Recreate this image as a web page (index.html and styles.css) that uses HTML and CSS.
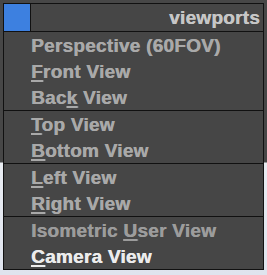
FILE: index.html
```html
<!DOCTYPE html>
<html lang="en">
  <head>
    <meta charset="utf-8" />
    <title>Viewports menu</title>
    <link rel="stylesheet" href="styles.css">
  </head>
  <body>
    <div class="menu">
      <div class="menu-header">
        <span class="swatch"></span>
        <span class="title">viewports</span>
      </div>
      <ul class="menu-group">
        <li>Perspective (60FOV)</li>
        <li><u>F</u>ront View</li>
        <li>Bac<u>k</u> View</li>
      </ul>
      <ul class="menu-group">
        <li><u>T</u>op View</li>
        <li><u>B</u>ottom View</li>
      </ul>
      <ul class="menu-group">
        <li><u>L</u>eft View</li>
        <li><u>R</u>ight View</li>
      </ul>
      <ul class="menu-group">
        <li class="dim">Isometric <u>U</u>ser View</li>
        <li class="active"><u>C</u>amera View</li>
      </ul>
    </div>
  </body>
</html>
```

FILE: styles.css
```css
body {
  margin: 0;
  height: 275px;
  background: linear-gradient(#474747 0, #474747 162px, #e9ecf2 163px, #dfe4ee 275px);
  font-family: "Liberation Sans", Arial, sans-serif;
  font-weight: bold;
  font-size: 19px;
  letter-spacing: 0.25px;
}
.menu {
  margin: 3px 3px 0 3px;
  border: 1px solid #111;
  background-color: #464646;
}
.menu-header {
  display: flex;
  align-items: center;
  height: 27px;
  border-bottom: 1px solid #111;
}
.swatch {
  width: 26px;
  height: 27px;
  background-color: #3d80e0;
  border-right: 1px solid #111;
}
.title {
  flex: 1;
  text-align: right;
  padding-right: 3px;
  color: #c6c6c6;
  line-height: 27px;
  text-shadow: 0.4px 0 0 #c6c6c6;
}
.menu-group {
  list-style: none;
  margin: 0;
  padding: 0;
  border-bottom: 1px solid #111;
}
.menu-group:last-child {
  border-bottom: none;
}
.menu-group li {
  height: 26px;
  line-height: 27px;
  padding-left: 27px;
  color: #a9a9a9;
  text-shadow: 0.4px 0 0 #a9a9a9;
}
.menu-group li.dim {
  color: #9c9c9c;
  text-shadow: 0.4px 0 0 #9c9c9c;
}
.menu-group li.active {
  color: #ececec;
  text-shadow: 0.4px 0 0 #ececec;
}
.menu-group u {
  text-decoration-thickness: 2px;
  text-underline-offset: 2px;
}
```
